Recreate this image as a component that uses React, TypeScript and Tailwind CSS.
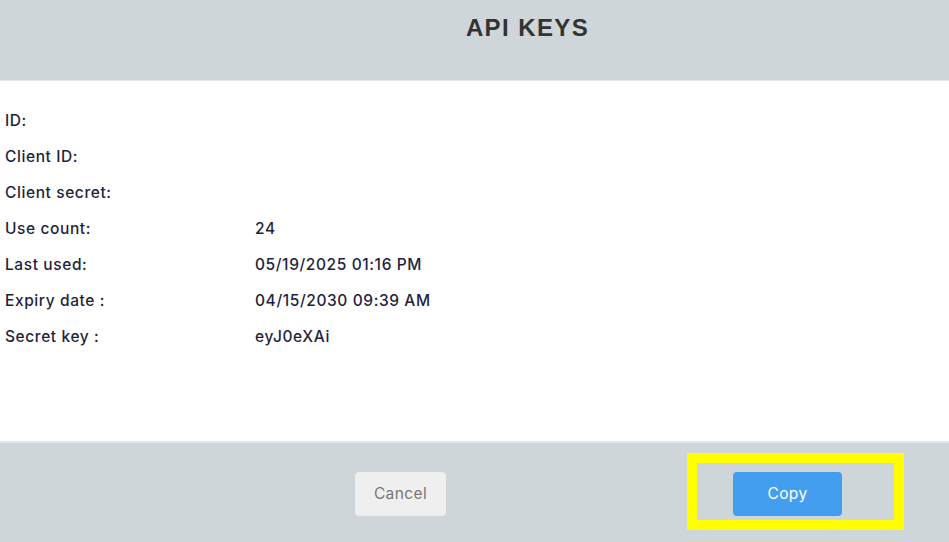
export default function App() {
  const rows: [string, string][] = [
    ["ID:", ""],
    ["Client ID:", ""],
    ["Client secret:", ""],
    ["Use count:", "24"],
    ["Last used:", "05/19/2025 01:16 PM"],
    ["Expiry date :", "04/15/2030 09:39 AM"],
    ["Secret key :", "eyJ0eXAi"],
  ];

  return (
    <div className="w-[949px] h-[542px] flex flex-col bg-white font-['Inter',sans-serif]">
      {/* Header */}
      <div className="h-[81px] bg-[#cfd6d9] border-b border-[#e3e7e9] pl-[106px] flex justify-center pt-[13px]">
        <h1 className="text-[24px] leading-[30px] font-bold tracking-[1.4px] text-[#333333] font-['Liberation_Sans',Arial,sans-serif]">
          API KEYS
        </h1>
      </div>

      {/* Body */}
      <div className="flex-1 pt-[22px] pl-[5px] text-[15.5px] tracking-[0.6px] font-medium text-[#1f1f3d]">
        {rows.map(([label, value]) => (
          <div key={label} className="flex h-[36px] items-center">
            <span className="w-[250px]">{label}</span>
            <span>{value}</span>
          </div>
        ))}
      </div>

      {/* Footer */}
      <div className="h-[101px] bg-[#cfd6d9] border-t-2 border-[#e4e7e8] flex items-start pt-[10px] pl-[355px]">
        <button className="mt-[19px] w-[91px] h-[44px] rounded-[4px] bg-[#efefef] text-[15.5px] tracking-[0.4px] text-[#777777]">
          Cancel
        </button>
        <div className="ml-[241px] border-[10px] border-[#ffff00] pl-[36px] pr-[52px] pt-[9px] pb-[4px]">
          <button className="w-[109px] h-[44px] rounded-[4px] bg-[#449ef0] text-[15.5px] tracking-[0.4px] text-white">
            Copy
          </button>
        </div>
      </div>
    </div>
  );
}
